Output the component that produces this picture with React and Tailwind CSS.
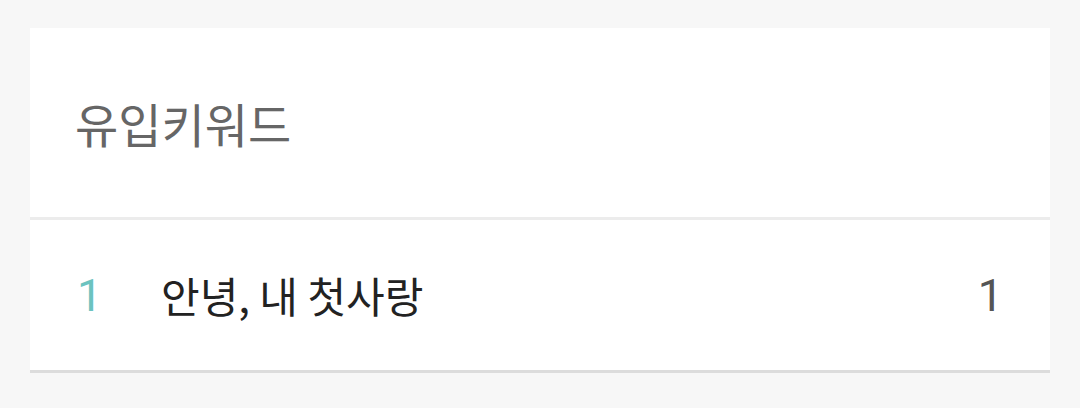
export default function App() {
  const font = { fontFamily: '"Noto Sans CJK KR", "Noto Sans", sans-serif' };
  const num = { fontFamily: 'Roboto, "Noto Sans", sans-serif' };
  return (
    <div className="min-h-[408px] bg-[#f7f7f7] pt-[28px] px-[30px]" style={font}>
      <div className="bg-white border-b-[3px] border-[#dcdcdc]">
        {/* Header */}
        <div className="h-[192px] flex items-center pl-[45px] border-b-[3px] border-[#ececec]">
          <h2 className="text-[47px] text-[#666666] leading-none">유입키워드</h2>
        </div>

        {/* Rows */}
        <div className="h-[150px] flex items-center pl-[47px] pr-[47px]">
          <span className="w-[84px] text-[45px] text-[#6cc3bf] leading-none" style={num}>1</span>
          <span className="flex-1 text-[42px] text-[#222222] leading-none">안녕, 내 첫사랑</span>
          <span className="text-[45px] text-[#555555] leading-none" style={num}>1</span>
        </div>
      </div>
    </div>
  );
}
